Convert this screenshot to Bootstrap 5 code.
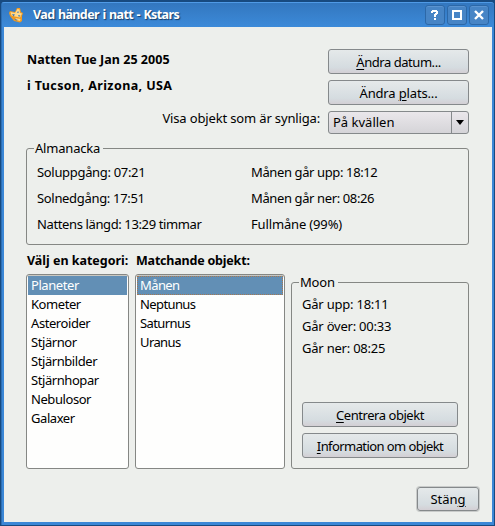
<!DOCTYPE html>
<html lang="sv">
<head>
<meta charset="utf-8">
<title>Vad händer i natt - Kstars</title>
<link href="https://cdn.jsdelivr.net/npm/bootstrap@5.3.0/dist/css/bootstrap.min.css" rel="stylesheet">
<style>
body{width:495px;height:526px;overflow:hidden;background:#10395f;font:13px/18px "Noto Sans","Open Sans",sans-serif;color:#000}
.window{width:495px;height:526px;padding:2px 1px 1px 1px;background:#174a80}
.frame{height:523px;padding:0 2px 3px 3px;background:#3b87d6;border-radius:3px 3px 0 0;border-left:1px solid #2d6fb4;border-top:1px solid #4f9ae6}
.titlebar{height:24px;background:linear-gradient(#3377bf,#3c8ad9);margin:0 -2px 0 -3px;padding:0 5px 0 6px;border-radius:3px 3px 0 0}
.title-text{color:#fff;font-weight:700;font-size:12.5px;text-shadow:1px 1px 1px #163c66;margin-left:9px;letter-spacing:-.6px;word-spacing:.8px;line-height:22px}
.tool{width:20px;height:20px;border:1px solid #2c68a8;border-radius:3px;background:#4785c6;box-shadow:inset 0 1px #5a93d0}
.panel{height:495px;background:#edefec;padding:22px 23px 0 22px;margin-left:-1px}
.btn-kde{display:block;height:25px;padding:0;font-size:13px;line-height:22px;color:#000;border:1px solid #85898b;border-radius:3px;background:linear-gradient(#e5e9ea,#d5dce0 75%,#d3cfd4);text-align:center;width:100%}
.heads{height:99px;padding-left:1px}
.bold-label{font-weight:700;font-size:12.5px;line-height:26px;letter-spacing:-.02px}
.night{line-height:22px;letter-spacing:.03px}
.place{letter-spacing:.4px;line-height:30px}
.match{letter-spacing:-.2px}
.choices{width:141px;gap:6px}
.combo{height:23px;border:1px solid #85898b;border-radius:3px;background:linear-gradient(#eae7eb,#d5d4d8);padding-left:4px;line-height:21px}
.combo-arrow{width:17px;border-left:1px solid #85898b}
.group{border:1px solid #858784;border-radius:3px;position:relative}
.legend-text{position:absolute;top:-9px;left:7px;line-height:16px;padding:0 3px 0 1px;background:#edefec;letter-spacing:-.2px}
.almanac{height:97px;padding:10px 0 0 10px}
.almanac .cell{line-height:26px;letter-spacing:-.38px}
.almanac .rise{letter-spacing:-.32px}
.sun{width:214px}
.lists{padding-top:3px;gap:6px}
.lists .bold-label{padding-left:1px}
.listing{height:195px;border:1px solid #858784;border-radius:3px;background:#fefefd;padding:1px;box-shadow:inset 0 1px #c8c8c2;letter-spacing:-.43px}
.entry{height:19px;line-height:18px;padding-left:3px}
.chosen{background:#628fb5;color:#fff;height:19px}
.dotted{outline:1px dotted #a57852;outline-offset:-1px}
.list-a{width:103px}.list-b{width:150px}
.planets{letter-spacing:-.6px}
.moon{width:178px;height:187px;margin-top:34px;padding:10px 10px}
.moon .cell{line-height:22px;letter-spacing:-.22px}
.close-btn{width:62px;height:24px;box-shadow:0 0 0 1px #c9cbca}
.footer-row{margin:18px -10px 0 0}
.t-visa{line-height:18px;letter-spacing:-.15px}
.tight{letter-spacing:-.45px}.tighter{letter-spacing:-.58px}.snug{letter-spacing:-.15px}
u{text-underline-offset:2px;text-decoration-thickness:1px}
</style>
<script src="https://cdn.jsdelivr.net/npm/bootstrap@5.3.0/dist/js/bootstrap.bundle.min.js"></script>
</head>
<body class="m-0">
<div class="window">
<div class="frame">
  <div class="titlebar d-flex align-items-center">
    <svg width="16" height="16" viewBox="0 0 16 16"><path d="M1 6 2 4l5 1 2-4h3l1 4 2 1-1 3v5l-2 1.500-6-1.500-4-5z" fill="#f09a22"/><path d="M2.500 5 7 6l2.500-4 2 .5L12 6l2 .5-2 4-5-1-3.500-1zM7.500 11l5 1-.5 2-4-1z" fill="#ffd98a"/><path d="M4 7l3 .5-1.500 2zM10 4l1 1.500-2 .5zM10 8l2.500.5L11 10zM6 11.500l4 1.500-2 .5z" fill="#3f7ab4"/></svg>
    <span class="title-text flex-grow-1">Vad händer i natt - Kstars</span>
    <div class="d-flex" style="gap:2px">
      <svg class="tool" viewBox="0 0 18 18" shape-rendering="crispEdges"><path d="M5 7V5h1V4h5v1h1v3h-1v1h-1v2H8V8h1V7h1V6H7v1zM8 12h2v2H8z" fill="#fff"/></svg>
      <svg class="tool" viewBox="0 0 18 18" shape-rendering="crispEdges"><path d="M5 5h8v8H5z" fill="none" stroke="#fff" stroke-width="2"/></svg>
      <svg class="tool" viewBox="0 0 18 18"><path d="m5 5 8 8m0-8-8 8" stroke="#fff" stroke-width="2.4"/></svg>
    </div>
  </div>
  <div class="panel">
    <div class="heads d-flex justify-content-between">
      <div class="d-flex flex-column flex-grow-1">
        <span class="bold-label night">Natten Tue Jan 25 2005</span>
        <span class="bold-label place">i Tucson, Arizona, USA</span>
        <span class="t-visa text-end pe-2 mt-2">Visa objekt som är synliga:</span>
      </div>
      <div class="choices d-flex flex-column">
        <button class="btn-kde tight"><u>Ä</u>ndra datum...</button>
        <button class="btn-kde snug">Ändra <u>p</u>lats...</button>
        <div class="combo d-flex justify-content-between"><span>På kvällen</span><span class="combo-arrow d-flex align-items-center justify-content-center"><svg width="8" height="5" viewBox="0 0 8 5"><path d="M0 0h8L4 5z"/></svg></span></div>
      </div>
    </div>
    <div class="group almanac">
      <span class="legend-text">Almanacka</span>
      <div class="d-flex">
        <div class="sun cell"><span class="rise">Soluppgång: 07:21<br>Solnedgång: 17:51</span><br>Nattens längd: 13:29 timmar</div>
        <div class="cell">Månen går upp: 18:12<br>Månen går ner: 08:26<br><span class="snug">Fullmåne (99%)</span></div>
      </div>
    </div>
    <div class="d-flex lists">
      <div class="list-a"><div class="bold-label text-nowrap">Välj en kategori:</div>
        <div class="listing"><div class="entry chosen">Planeter</div><div class="entry">Kometer</div><div class="entry">Asteroider</div><div class="entry">Stjärnor</div><div class="entry">Stjärnbilder</div><div class="entry">Stjärnhopar</div><div class="entry">Nebulosor</div><div class="entry">Galaxer</div></div>
      </div>
      <div class="list-b"><div class="bold-label match">Matchande objekt:</div>
        <div class="listing planets"><div class="entry chosen dotted">Månen</div><div class="entry">Neptunus</div><div class="entry">Saturnus</div><div class="entry">Uranus</div></div>
      </div>
      <div class="group moon d-flex flex-column">
        <span class="legend-text">Moon</span>
        <div class="cell">Går upp: 18:11<br>Går över: 00:33<br>Går ner: 08:25</div>
        <div class="mt-auto d-flex flex-column" style="gap:6px"><button class="btn-kde tight"><u>C</u>entrera objekt</button><button class="btn-kde tighter"><u>I</u>nformation om objekt</button></div>
      </div>
    </div>
    <div class="footer-row d-flex justify-content-end"><button class="btn-kde close-btn">Stän<u>g</u></button></div>
  </div>
</div>
</div>
</body>
</html>
